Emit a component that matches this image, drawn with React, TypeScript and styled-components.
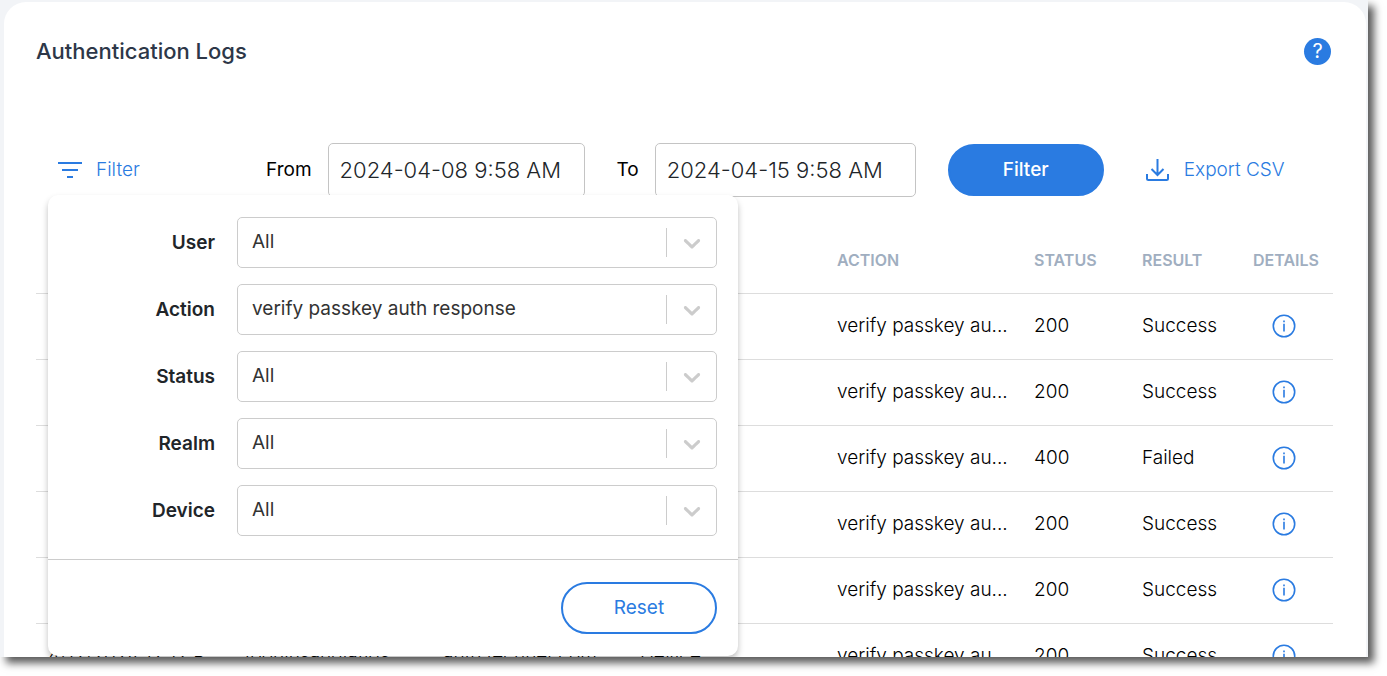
import React from "react";
import styled, { createGlobalStyle } from "styled-components";

const BLUE = "#2a7be1";

const GlobalStyle = createGlobalStyle`
  *, *::before, *::after { box-sizing: border-box; }
  body {
    margin: 0;
    background: #fff;
    color: #000;
    font: 400 19px/24px Inter, "Liberation Sans", sans-serif;
  }
  button, input, select { font: inherit; margin: 0; }
  svg { display: block; }
`;

const Page = styled.div`
  display: flex;
  height: 100vh;
  padding: 0 19px 19px 0;
  overflow: hidden;
`;

const Frame = styled.main`
  flex: 1;
  min-width: 0;
  display: flex;
  background: #f2f4f7;
  box-shadow: 6px 6px 8px rgba(0, 0, 0, 0.65);
  padding: 2px 2px 0 4px;
`;

const Card = styled.section`
  flex: 1;
  min-width: 0;
  overflow: hidden;
  background: #fff;
  border-radius: 22px 22px 0 0;
  padding: 34px 33px 0 32px;
`;

const Header = styled.header`
  display: flex;
  align-items: center;
  justify-content: space-between;
  height: 30px;
  padding-right: 2px;
`;

const Title = styled.h1`
  margin: 0;
  font-size: 22px;
  line-height: 28px;
  font-weight: 500;
  color: #2d3748;
`;

const HelpButton = styled.button`
  width: 27px;
  height: 27px;
  padding: 0;
  border: 0;
  border-radius: 50%;
  background: ${BLUE};
  color: #fff;
  font-size: 20px;
  line-height: 27px;
`;

const Toolbar = styled.div`
  display: flex;
  align-items: center;
  gap: 32px;
  margin-top: 77px;
  padding-left: 22px;
`;

const FilterMenu = styled.div`
  position: relative;
  width: 176px;
`;

const LinkButton = styled.button`
  display: flex;
  align-items: center;
  gap: 13px;
  height: 52px;
  padding: 0;
  border: 0;
  background: none;
  color: ${BLUE};
  font-weight: 300;
  white-space: nowrap;
`;

const ExportButton = styled(LinkButton)`
  gap: 15px;
  margin-left: 10px;
`;

const DateField = styled.label`
  display: flex;
  align-items: center;
  gap: 16px;
`;

const DateInput = styled.input<{ $width: number }>`
  width: ${(p) => p.$width}px;
  height: 54px;
  padding: 0 11px;
  border: 1px solid #c4c4c4;
  border-radius: 5px;
  background: #fff;
  color: #212529;
  font-size: 22px;
  font-weight: 300;
`;

const PillButton = styled.button<{ $outline?: boolean }>`
  width: 156px;
  height: 52px;
  border: 2px solid ${BLUE};
  border-radius: 26px;
  background: ${(p) => (p.$outline ? "#fff" : BLUE)};
  color: ${(p) => (p.$outline ? BLUE : "#fff")};
  font-weight: ${(p) => (p.$outline ? 400 : 500)};
`;

const Panel = styled.form`
  position: absolute;
  z-index: 1;
  top: 51px;
  left: -10px;
  width: 690px;
  border-radius: 10px;
  background: #fff;
  box-shadow: 0 4px 6px rgba(0, 0, 0, 0.25);
`;

const Fields = styled.div`
  display: grid;
  gap: 16px;
  padding: 22px 21px 23px;
`;

const Field = styled.label`
  display: grid;
  grid-template-columns: 146px 1fr;
  gap: 22px;
  align-items: center;
  color: #212529;
  font-weight: 600;
  text-align: right;
`;

const SelectBox = styled.span`
  display: grid;
  grid-template-columns: 1fr 50px;
  align-items: center;
  height: 51px;
  border: 1px solid #ccc;
  border-radius: 5px;
`;

const Select = styled.select`
  grid-area: 1 / 1 / 2 / 3;
  height: 100%;
  padding: 0 60px 2px 14px;
  border: 0;
  background: none;
  appearance: none;
  color: #333;
  font-weight: 400;
`;

const SelectArrow = styled.span`
  grid-area: 1 / 2;
  display: flex;
  align-items: center;
  justify-content: center;
  height: 29px;
  border-left: 1px solid #ccc;
  color: #ccc;
  pointer-events: none;
`;

const PanelFooter = styled.footer`
  display: flex;
  justify-content: flex-end;
  padding: 22px 21px;
  border-top: 1px solid #ccc;
`;

const Table = styled.table`
  width: 100%;
  margin-top: 30px;
  border-collapse: collapse;
  table-layout: fixed;
`;

const Col = styled.col<{ $width: number }>`
  width: ${(p) => p.$width}px;
`;

const Row = styled.tr`
  height: 66px;
  border-bottom: 1px solid #ddd;
`;

const HeadCell = styled.th`
  padding: 0 12px;
  text-align: left;
  font-size: 16px;
  font-weight: 600;
  color: #a0aec0;
  white-space: nowrap;
`;

const Cell = styled.td`
  padding: 0 12px;
  font-weight: 300;
  white-space: nowrap;
`;

const InfoButton = styled.button`
  display: block;
  margin-left: 19px;
  padding: 0;
  border: 0;
  background: none;
  color: ${BLUE};
`;

const FilterIcon = () => (
  <svg width="25" height="18" viewBox="0 0 25 18" fill="none" stroke="currentColor" strokeWidth="2" aria-hidden="true">
    <path d="M0 2h24M4 9h16M9 16h6" />
  </svg>
);

const ExportIcon = () => (
  <svg width="23" height="24" viewBox="0 0 23 24" fill="none" stroke="currentColor" strokeWidth="2" aria-hidden="true">
    <path d="M11.5 1v16M5.5 11l6 6 6-6M1 16v4.5a1.5 1.5 0 0 0 1.5 1.5h18a1.5 1.5 0 0 0 1.5-1.5V16" />
  </svg>
);

const ChevronIcon = () => (
  <svg width="28" height="28" viewBox="0 0 20 20" fill="currentColor" aria-hidden="true">
    <path d="M4.516 7.548c0.436-0.446 1.043-0.481 1.576 0l3.908 3.747 3.908-3.747c0.533-0.481 1.141-0.446 1.574 0 0.436 0.445 0.408 1.197 0 1.615-0.406 0.418-4.695 4.502-4.695 4.502-0.217 0.223-0.502 0.335-0.787 0.335s-0.57-0.112-0.789-0.335c0 0-4.287-4.084-4.695-4.502s-0.436-1.17 0-1.615z" />
  </svg>
);

const InfoIcon = () => (
  <svg width="24" height="24" viewBox="0 0 24 24" fill="none" stroke="currentColor" strokeWidth="1.6" aria-hidden="true">
    <circle cx="12" cy="12" r="10.7" />
    <path d="M12 9.8v7.6M12 6.4v1.8" />
  </svg>
);

const filters = [
  { label: "User", value: "All" },
  { label: "Action", value: "verify passkey auth response" },
  { label: "Status", value: "All" },
  { label: "Realm", value: "All" },
  { label: "Device", value: "All" },
];

const columns = [
  { name: "DATE", width: 197 },
  { name: "USER", width: 198 },
  { name: "REALM", width: 197 },
  { name: "DEVICE", width: 197 },
  { name: "ACTION", width: 197 },
  { name: "STATUS", width: 108 },
  { name: "RESULT", width: 111 },
  { name: "DETAILS", width: 92 },
];

const logs = [
  { date: "4/15/2024 9:52 AM", status: 200, result: "Success" },
  { date: "4/15/2024 9:47 AM", status: 200, result: "Success" },
  { date: "4/15/2024 9:46 AM", status: 400, result: "Failed" },
  { date: "4/12/2024 4:31 PM", status: 200, result: "Success" },
  { date: "4/12/2024 2:18 PM", status: 200, result: "Success" },
  { date: "4/12/2024 12:12 P", status: 200, result: "Success" },
];

export default function App() {
  return (
    <Page>
      <GlobalStyle />
      <Frame>
        <Card>
          <Header>
            <Title>Authentication Logs</Title>
            <HelpButton aria-label="Help">?</HelpButton>
          </Header>

          <Toolbar>
            <FilterMenu>
              <LinkButton aria-expanded="true">
                <FilterIcon />
                Filter
              </LinkButton>
              <Panel>
                <Fields>
                  {filters.map((f) => (
                    <Field key={f.label}>
                      {f.label}
                      <SelectBox>
                        <Select defaultValue={f.value}>
                          <option>{f.value}</option>
                        </Select>
                        <SelectArrow>
                          <ChevronIcon />
                        </SelectArrow>
                      </SelectBox>
                    </Field>
                  ))}
                </Fields>
                <PanelFooter>
                  <PillButton type="reset" $outline>
                    Reset
                  </PillButton>
                </PanelFooter>
              </Panel>
            </FilterMenu>
            <DateField>
              From
              <DateInput type="text" defaultValue="2024-04-08 9:58 AM" $width={257} />
            </DateField>
            <DateField>
              To
              <DateInput type="text" defaultValue="2024-04-15 9:58 AM" $width={261} />
            </DateField>
            <PillButton>Filter</PillButton>
            <ExportButton>
              <ExportIcon />
              Export CSV
            </ExportButton>
          </Toolbar>

          <Table>
            <colgroup>
              {columns.map((c) => (
                <Col key={c.name} $width={c.width} />
              ))}
            </colgroup>
            <thead>
              <Row>
                {columns.map((c) => (
                  <HeadCell key={c.name}>{c.name}</HeadCell>
                ))}
              </Row>
            </thead>
            <tbody>
              {logs.map((log) => (
                <Row key={log.date}>
                  <Cell>{log.date}</Cell>
                  <Cell>tooninsandiafigs</Cell>
                  <Cell>auth.tecnher.com</Cell>
                  <Cell>Device</Cell>
                  <Cell title="verify passkey auth response">verify passkey au...</Cell>
                  <Cell>{log.status}</Cell>
                  <Cell>{log.result}</Cell>
                  <Cell>
                    <InfoButton aria-label="Show details">
                      <InfoIcon />
                    </InfoButton>
                  </Cell>
                </Row>
              ))}
            </tbody>
          </Table>
        </Card>
      </Frame>
    </Page>
  );
}
